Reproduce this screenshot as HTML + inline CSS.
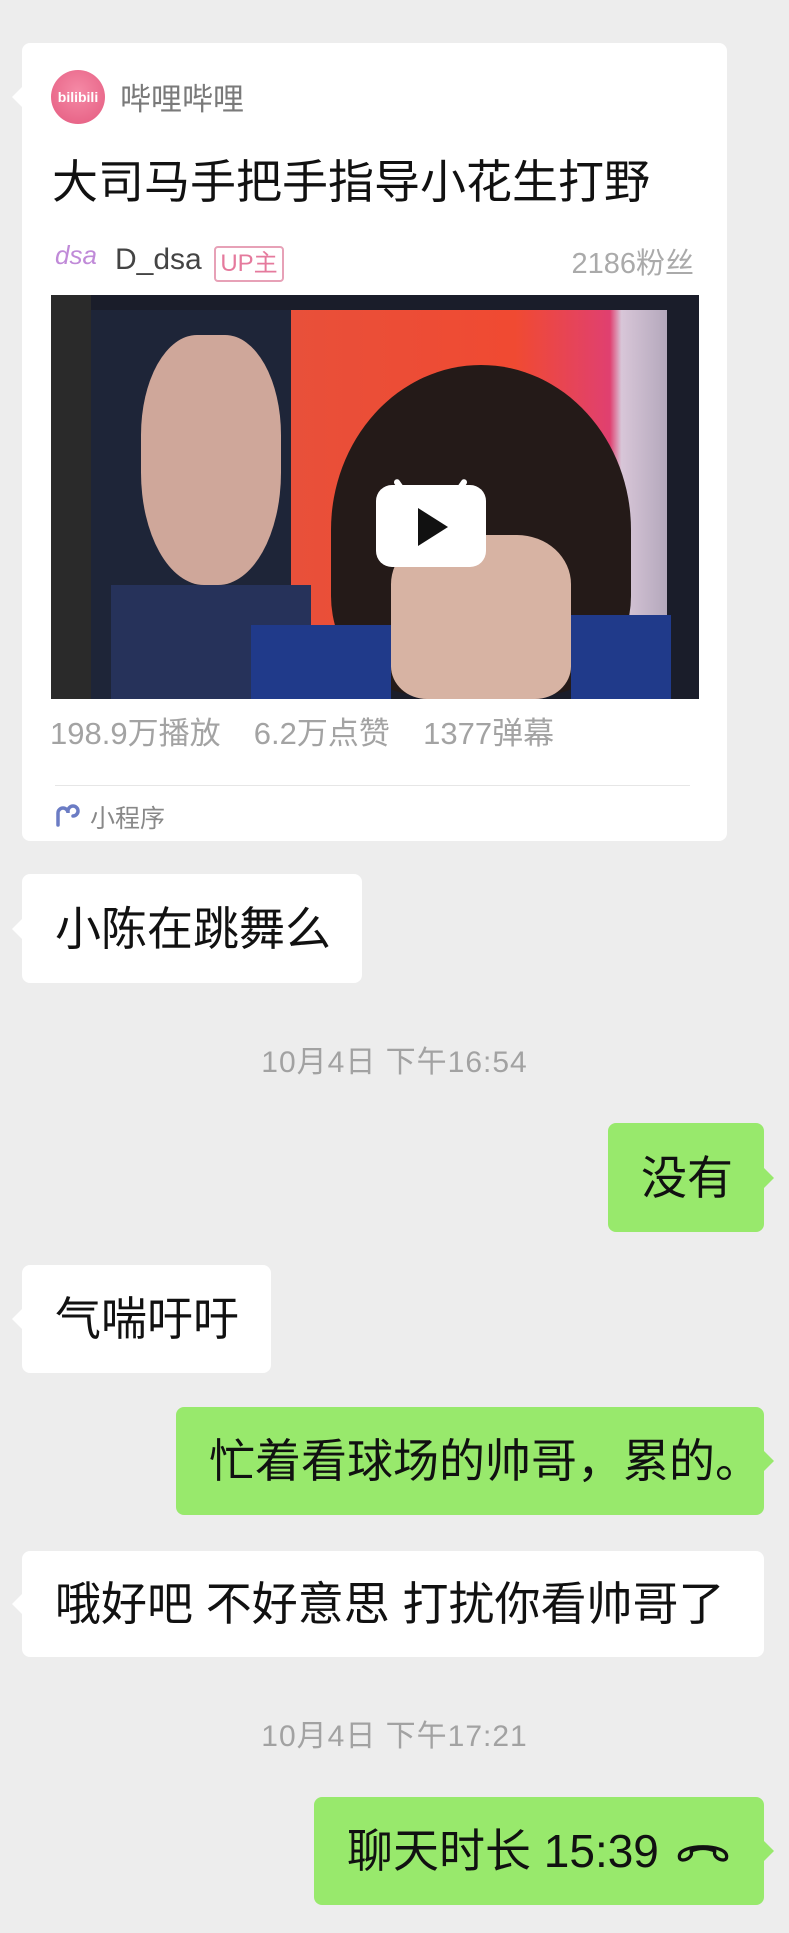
<!DOCTYPE html>
<html><head><meta charset="utf-8">
<style>
body{margin:0;width:789px;height:1933px;background:#ededed;position:relative;overflow:hidden;font-family:"Liberation Sans","Noto Sans CJK SC",sans-serif;}
.abs{position:absolute;}
.b{position:absolute;border-radius:8px;font-size:46px;color:#111;line-height:1;display:flex;align-items:center;white-space:nowrap;box-sizing:border-box;padding-left:33px;}
.w{background:#fff;}
.g{background:#98e96c;}
.tl::before{content:"";position:absolute;left:-10px;top:50%;margin-top:-10px;border:10px solid transparent;border-left:0;border-right-color:#fff;}
.tr::after{content:"";position:absolute;right:-10px;top:50%;margin-top:-10px;border:10px solid transparent;border-right:0;border-left-color:#98e96c;}
.ts{position:absolute;left:0;width:789px;text-align:center;font-size:30px;color:#a2a2a2;letter-spacing:1px;}
</style></head><body>

<div class="abs" style="left:22px;top:43px;width:705px;height:798px;background:#fff;border-radius:8px;"></div>
<div class="abs" style="left:12px;top:87px;border:10px solid transparent;border-left:0;border-right-color:#fff;"></div>

<div class="abs" style="left:51px;top:70px;width:54px;height:54px;border-radius:50%;background:radial-gradient(circle at 50% 40%,#f58aa6,#e45a7f);color:#fff;font-size:14px;font-weight:bold;display:flex;align-items:center;justify-content:center;">bilibili</div>
<div class="abs" style="left:120px;top:74px;font-size:31px;color:#7a7a7a;">哔哩哔哩</div>

<div class="abs" style="left:52px;top:146px;font-size:46px;color:#111;">大司马手把手指导小花生打野</div>

<div class="abs" style="left:55px;top:240px;font-size:26px;color:#c08ad8;font-style:italic;">dsa</div>
<div class="abs" style="left:115px;top:243px;font-size:30px;color:#444;">D_dsa</div>
<div class="abs" style="left:214px;top:246px;width:66px;height:32px;border:2px solid #e7a1b7;border-radius:4px;color:#e57a9d;font-size:24px;line-height:32px;text-align:center;">UP主</div>
<div class="abs" style="right:95px;top:240px;font-size:29px;color:#aaa;">2186粉丝</div>

<div class="abs" style="left:51px;top:295px;width:648px;height:404px;overflow:hidden;background:#1a1d2a;">
  <div class="abs" style="left:0;top:0;width:40px;height:404px;background:#2a2a2a;"></div>
  <div class="abs" style="left:236px;top:15px;width:380px;height:340px;background:linear-gradient(90deg,#e8503a,#f04a32 60%,#e04070 85%,#d8c6d8 88%,#b4a8bc);"></div>
  <div class="abs" style="left:40px;top:15px;width:200px;height:389px;background:#1e2538;"></div>
  <div class="abs" style="left:90px;top:40px;width:140px;height:250px;border-radius:40% 40% 45% 45%;background:#cfa79a;"></div>
  <div class="abs" style="left:60px;top:290px;width:200px;height:114px;background:#26325a;"></div>
  <div class="abs" style="left:280px;top:70px;width:300px;height:330px;border-radius:50% 50% 30% 30%;background:#241a18;"></div>
  <div class="abs" style="left:340px;top:240px;width:180px;height:164px;border-radius:30% 30% 20% 20%;background:#d7b3a3;"></div>
  <div class="abs" style="left:200px;top:330px;width:140px;height:74px;background:#203a8a;"></div>
  <div class="abs" style="left:520px;top:320px;width:100px;height:84px;background:#203a8a;"></div>
  <div class="abs" style="left:325px;top:190px;width:110px;height:82px;border-radius:16px;background:#fff;"></div>
  <div class="abs" style="left:347px;top:183px;width:6px;height:20px;background:#fff;border-radius:3px;transform:rotate(-35deg);"></div>
  <div class="abs" style="left:406px;top:183px;width:6px;height:20px;background:#fff;border-radius:3px;transform:rotate(35deg);"></div>
  <div class="abs" style="left:367px;top:213px;border-left:30px solid #111;border-top:19px solid transparent;border-bottom:19px solid transparent;"></div>
</div>

<div class="abs" style="left:50px;top:708px;font-size:31px;color:#a3a3a3;word-spacing:8px;">198.9万播放&nbsp; 6.2万点赞&nbsp; 1377弹幕</div>
<div class="abs" style="left:55px;top:785px;width:635px;height:1px;background:#e6e6e6;"></div>
<svg class="abs" style="left:55px;top:799px" width="26" height="28" viewBox="0 0 26 28"><path d="M3 26 L3 14 A5 5 0 0 1 13 14 L13 12 A5 5 0 1 1 18 17" fill="none" stroke="#6b7cc4" stroke-width="3.5" stroke-linecap="round"/></svg>
<div class="abs" style="left:90px;top:799px;font-size:25px;color:#888;">小程序</div>

<div class="b w tl" style="left:22px;top:874px;width:340px;height:109px;">小陈在跳舞么</div>
<div class="ts" style="top:1037px;">10月4日 下午16:54</div>
<div class="b g tr" style="left:608px;top:1123px;width:156px;height:109px;">没有</div>
<div class="b w tl" style="left:22px;top:1265px;width:249px;height:108px;">气喘吁吁</div>
<div class="b g tr" style="left:176px;top:1407px;width:588px;height:108px;">忙着看球场的帅哥，累的。</div>
<div class="b w tl" style="left:22px;top:1551px;width:742px;height:106px;">哦好吧 不好意思 打扰你看帅哥了</div>
<div class="ts" style="top:1711px;">10月4日 下午17:21</div>
<div class="b g tr" style="left:314px;top:1797px;width:450px;height:108px;">聊天时长 15:39
<svg style="margin-left:16px" width="56" height="28" viewBox="0 0 52 26"><path d="M4 18 C4 6 48 6 48 18 C48 22 44 22 40 20 C37 18 36 16 37 13 C30 10 22 10 15 13 C16 16 15 18 12 20 C8 22 4 22 4 18 Z" fill="none" stroke="#111" stroke-width="3" stroke-linejoin="round"/></svg>
</div>

</body></html>
